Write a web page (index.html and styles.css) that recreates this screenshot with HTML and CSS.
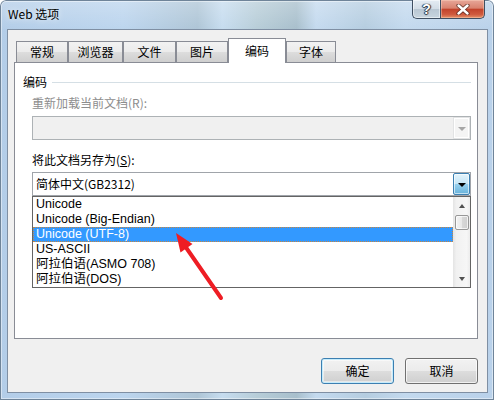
FILE: index.html
```html
<!DOCTYPE html>
<html lang="zh-CN">
<head>
<meta charset="utf-8">
<title>Web 选项</title>
<link rel="stylesheet" href="styles.css">
</head>
<body>
<div class="window">
  <div class="titlebar">
    <span class="title">Web 选项</span>
    <div class="caption-btns">
      <div class="cbtn help"><span class="q">?</span></div>
      <div class="cbtn close">
        <svg width="14" height="11" viewBox="0 0 14 11">
          <path d="M2.5 1.5 L11.5 9.5 M11.5 1.5 L2.5 9.5" stroke="#4a2219" stroke-width="4.2" stroke-linecap="round" fill="none" opacity="0.75"/>
          <path d="M2.5 1.5 L11.5 9.5 M11.5 1.5 L2.5 9.5" stroke="#ffffff" stroke-width="2.4" stroke-linecap="round" fill="none"/>
        </svg>
      </div>
    </div>
  </div>
  <div class="client">
    <div class="tabs">
      <div class="tab w52">常规</div>
      <div class="tab w55">浏览器</div>
      <div class="tab w53">文件</div>
      <div class="tab w52">图片</div>
      <div class="tab active w58">编码</div>
      <div class="tab w50">字体</div>
    </div>
    <div class="panel">
      <div class="group-head"><span>编码</span><i class="rule"></i></div>
      <div class="fields">
        <div class="label disabled">重新加载当前文档(R):</div>
        <div class="combo disabled">
          <div class="combo-text"></div>
          <div class="drop drop-disabled"><i class="tri tri-grey"></i></div>
        </div>
        <div class="label second">将此文档另存为(<u>S</u>):</div>
        <div class="combo-wrap">
          <div class="combo active">
            <div class="combo-text">简体中文(GB2312)</div>
            <div class="drop drop-active"><i class="tri"></i></div>
          </div>
          <div class="dropdown">
            <div class="items">
              <div class="item">Unicode</div>
              <div class="item">Unicode (Big-Endian)</div>
              <div class="item sel">Unicode (UTF-8)</div>
              <div class="item">US-ASCII</div>
              <div class="item">阿拉伯语(ASMO 708)</div>
              <div class="item">阿拉伯语(DOS)</div>
            </div>
            <div class="scroll">
              <div class="sbtn"><i class="stri up"></i></div>
              <div class="thumb"></div>
              <div class="strack"></div>
              <div class="sbtn"><i class="stri down"></i></div>
            </div>
          </div>
        </div>
      </div>
    </div>
    <div class="actions">
      <button class="btn default">确定</button>
      <button class="btn">取消</button>
    </div>
  </div>
  <svg class="arrow" width="494" height="400" viewBox="0 0 494 400">
    <line x1="221" y1="298" x2="185" y2="246" stroke="#ee1d24" stroke-width="4" stroke-linecap="round"/>
    <polygon points="176,233 192.5,244 180.5,252.5" fill="#ee1d24"/>
  </svg>
</div>
</body>
</html>
```

FILE: styles.css
```css
html, body {
  margin: 0;
  padding: 0;
}
body {
  font-family: "Noto Sans CJK SC", "Microsoft YaHei", sans-serif;
  font-size: 12px;
  color: #000;
  background: #fff;
}
.window {
  position: relative;
  width: 494px;
  height: 400px;
  box-sizing: border-box;
  padding: 0 6px 7px 7px;
  display: flex;
  flex-direction: column;
  border-radius: 6px 6px 0 0;
  background:
    linear-gradient(180deg, rgba(255,255,255,0.25) 0, rgba(255,255,255,0) 30px),
    linear-gradient(90deg, #b3cde8 0, #bcd5ee 25%, #aec5d6 40%, #c6dcef 45%, #b7cdd8 52%, #a8bfcc 60%, #c4daef 64%, #b5cde0 74%, #c3d9ee 82%, #b9d1ea 100%);
  box-shadow: inset 0 0 0 1px #6f8499, inset 0 0 0 2px rgba(255,255,255,0.45);
  overflow: hidden;
}
.titlebar {
  flex: none;
  height: 29px;
  display: flex;
  align-items: flex-start;
}
.title {
  margin: 5px 0 0 1px;
  line-height: 18px;
  font-size: 12px;
  color: #000;
  text-shadow: 0 0 6px rgba(255,255,255,0.9);
}
.caption-btns {
  margin-left: auto;
  margin-right: 3px;
  display: flex;
}
.cbtn {
  height: 19px;
  box-sizing: border-box;
  border: 1px solid #3f4f62;
  border-top: none;
  display: flex;
  align-items: center;
  justify-content: center;
}
.help {
  width: 28px;
  border-right: none;
  border-radius: 0 0 0 5px;
  background: linear-gradient(180deg, #e4ecf3 0, #d3dde6 48%, #b9c7d3 52%, #c8d5df 100%);
  box-shadow: inset 0 0 0 1px rgba(255,255,255,0.5);
}
.q {
  font-family: "Liberation Sans", sans-serif;
  font-weight: bold;
  font-size: 14px;
  line-height: 16px;
  color: #fff;
  text-shadow: 0 0 1px #2b3440, 1px 0 1px #2b3440, -1px 0 1px #2b3440, 0 1px 1px #2b3440;
}
.close {
  width: 45px;
  border-radius: 0 0 5px 0;
  background: linear-gradient(180deg, #e7a799 0, #d9826f 45%, #c2432c 52%, #cf5a3e 80%, #e49068 100%);
  box-shadow: inset 0 0 0 1px rgba(255,220,200,0.4);
}
.client {
  flex: 1;
  display: flex;
  flex-direction: column;
  border: 1px solid #7f8fa3;
  background: #f0f0f0;
  padding: 8px 9px 8px 6px;
}
.tabs {
  display: flex;
  align-items: flex-end;
  height: 24px;
  padding-left: 2px;
  position: relative;
  z-index: 1;
  flex: none;
}
.tab {
  box-sizing: border-box;
  height: 21px;
  border: 1px solid #898c95;
  border-bottom: none;
  background: linear-gradient(180deg, #f2f2f2 0, #ebebeb 50%, #dddddd 50%, #cfcfcf 100%);
  text-align: center;
  line-height: 19px;
  white-space: nowrap;
}
.tab.active {
  height: 25px;
  margin-bottom: -1px;
  background: #fff;
  line-height: 23px;
}
.w50 { width: 50px; }
.w52 { width: 52px; }
.w53 { width: 53px; }
.w55 { width: 55px; }
.w58 { width: 58px; }
.panel {
  flex: none;
  height: 277px;
  box-sizing: border-box;
  border: 1px solid #898c95;
  background: #fff;
  padding: 11px 6px 0 8px;
}
.group-head {
  display: flex;
  align-items: center;
  height: 16px;
  line-height: 16px;
}
.group-head .rule {
  flex: 1;
  height: 1px;
  background: #d5dfe5;
  margin-left: 5px;
}
.fields {
  padding-left: 9px;
}
.label {
  line-height: 16px;
  margin-top: 5px;
}
.label.disabled {
  color: #8d8d8d;
}
.label.second {
  margin-top: 12px;
}
.label u {
  text-decoration: underline;
}
.combo {
  height: 24px;
  box-sizing: border-box;
  border: 1px solid #abadb3;
  margin-top: 5px;
  display: flex;
  background: #fff;
}
.combo.disabled {
  background: #f0f0f0;
  border-color: #adb2b5;
}
.combo.active {
  margin-top: 4px;
  border-color: #a0a4aa;
}
.combo-text {
  flex: 1;
  padding-left: 3px;
  line-height: 22px;
  white-space: nowrap;
}
.drop {
  width: 17px;
  height: 22px;
  box-sizing: border-box;
  display: flex;
  align-items: center;
  justify-content: center;
}
.drop-disabled {
  background: #f4f4f4;
  border: 1px solid #e2e3e4;
  box-shadow: inset 0 0 0 1px #fff;
}
.drop-active {
  border: 1px solid #3c7fb1;
  border-radius: 2px;
  background: linear-gradient(180deg, #e5f4fc 0, #c4e5f6 50%, #98d1ef 50%, #68b3db 100%);
  box-shadow: inset 0 0 0 1px rgba(255,255,255,0.6);
}
.tri {
  width: 0;
  height: 0;
  border-left: 4px solid transparent;
  border-right: 4px solid transparent;
  border-top: 4px solid #000;
  margin-top: 2px;
}
.tri-grey {
  border-top-color: #a6a6a6;
}
.combo-wrap {
  position: relative;
}
.dropdown {
  position: absolute;
  top: 100%;
  left: 0;
  right: 0;
  height: 92px;
  box-sizing: border-box;
  border: 1px solid #646464;
  background: #fff;
  display: flex;
}
.items {
  flex: 1;
  font-family: "Liberation Sans", "Noto Sans CJK SC", sans-serif;
  font-size: 12.5px;
}
.item {
  height: 15px;
  line-height: 15px;
  padding-left: 3px;
  white-space: nowrap;
  overflow: hidden;
}
.item.sel {
  background: #3399ff;
  color: #fff;
  outline: 1px dotted #c9853c;
  outline-offset: -1px;
}
.scroll {
  width: 17px;
  display: flex;
  flex-direction: column;
  background: linear-gradient(90deg, #e4e4e4 0, #f1f1f1 20%, #f6f6f6 80%, #ececec 100%);
}
.sbtn {
  height: 17px;
  flex: none;
  display: flex;
  align-items: center;
  justify-content: center;
}
.stri {
  width: 0;
  height: 0;
  border-left: 3.5px solid transparent;
  border-right: 3.5px solid transparent;
}
.stri.up {
  border-bottom: 4px solid #505050;
}
.stri.down {
  border-top: 4px solid #505050;
}
.thumb {
  height: 15px;
  margin: 1px 1px 0 2px;
  box-sizing: border-box;
  border: 1px solid #979797;
  border-radius: 2px;
  background: linear-gradient(90deg, #f3f3f3 0, #e8e8e8 50%, #d8d8d8 50%, #cfcfcf 100%);
  box-shadow: inset 0 0 0 1px rgba(255,255,255,0.7);
}
.strack {
  flex: 1;
}
.actions {
  flex: none;
  display: flex;
  justify-content: flex-end;
  gap: 11px;
  margin-top: 19px;
}
.btn {
  width: 73px;
  height: 26px;
  box-sizing: border-box;
  padding: 0;
  margin: 0;
  border: 1px solid #707070;
  border-radius: 3px;
  background: linear-gradient(180deg, #f2f2f2 0, #ebebeb 50%, #dddddd 50%, #cfcfcf 100%);
  box-shadow: inset 0 0 0 1px rgba(255,255,255,0.7);
  font-family: "Noto Sans CJK SC", sans-serif;
  font-size: 12px;
  line-height: 22px;
  color: #000;
}
.btn.default {
  border-color: #3c7fb1;
  box-shadow: inset 0 0 0 1px #c6ecfc, inset 0 0 0 2px rgba(255,255,255,0.5);
}
.arrow {
  position: absolute;
  left: 0;
  top: 0;
  pointer-events: none;
}
```
